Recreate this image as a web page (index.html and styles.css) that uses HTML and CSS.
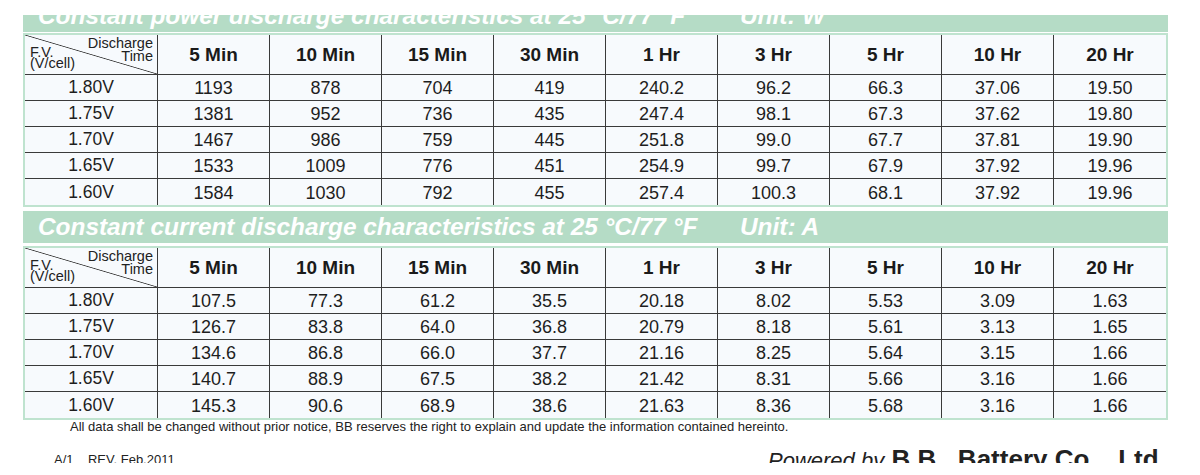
FILE: index.html
```html
<!DOCTYPE html>
<html>
<head>
<meta charset="utf-8">
<link rel="stylesheet" href="styles.css">
</head>
<body>
<div class="page">
  <div class="band band-clipped">
    <div class="band-line"><span>Constant power discharge characteristics at 25 °C/77 °F</span><span>Unit: W</span></div>
  </div>
  <table class="grid grid-first">
    <colgroup><col class="c0"><col class="cn"><col class="cn"><col class="cn"><col class="cn"><col class="cn"><col class="cn"><col class="cn"><col class="cn"><col class="cn"></colgroup>
    <thead>
      <tr>
        <th class="corner"><div class="corner-box"><span class="corner-top">Discharge<br>Time</span><span class="corner-bottom">F.V.<br>(V/cell)</span></div></th>
        <th>5 Min</th><th>10 Min</th><th>15 Min</th><th>30 Min</th><th>1 Hr</th><th>3 Hr</th><th>5 Hr</th><th>10 Hr</th><th>20 Hr</th>
      </tr>
    </thead>
    <tbody>
      <tr><td class="fv">1.80V</td><td>1193</td><td>878</td><td>704</td><td>419</td><td>240.2</td><td>96.2</td><td>66.3</td><td>37.06</td><td>19.50</td></tr>
      <tr><td class="fv">1.75V</td><td>1381</td><td>952</td><td>736</td><td>435</td><td>247.4</td><td>98.1</td><td>67.3</td><td>37.62</td><td>19.80</td></tr>
      <tr><td class="fv">1.70V</td><td>1467</td><td>986</td><td>759</td><td>445</td><td>251.8</td><td>99.0</td><td>67.7</td><td>37.81</td><td>19.90</td></tr>
      <tr><td class="fv">1.65V</td><td>1533</td><td>1009</td><td>776</td><td>451</td><td>254.9</td><td>99.7</td><td>67.9</td><td>37.92</td><td>19.96</td></tr>
      <tr><td class="fv">1.60V</td><td>1584</td><td>1030</td><td>792</td><td>455</td><td>257.4</td><td>100.3</td><td>68.1</td><td>37.92</td><td>19.96</td></tr>
    </tbody>
  </table>
  <div class="band band-second">
    <div class="band-line"><span>Constant current discharge characteristics at 25 °C/77 °F</span><span>Unit: A</span></div>
  </div>
  <table class="grid grid-second">
    <colgroup><col class="c0"><col class="cn"><col class="cn"><col class="cn"><col class="cn"><col class="cn"><col class="cn"><col class="cn"><col class="cn"><col class="cn"></colgroup>
    <thead>
      <tr>
        <th class="corner"><div class="corner-box"><span class="corner-top">Discharge<br>Time</span><span class="corner-bottom">F.V.<br>(V/cell)</span></div></th>
        <th>5 Min</th><th>10 Min</th><th>15 Min</th><th>30 Min</th><th>1 Hr</th><th>3 Hr</th><th>5 Hr</th><th>10 Hr</th><th>20 Hr</th>
      </tr>
    </thead>
    <tbody>
      <tr><td class="fv">1.80V</td><td>107.5</td><td>77.3</td><td>61.2</td><td>35.5</td><td>20.18</td><td>8.02</td><td>5.53</td><td>3.09</td><td>1.63</td></tr>
      <tr><td class="fv">1.75V</td><td>126.7</td><td>83.8</td><td>64.0</td><td>36.8</td><td>20.79</td><td>8.18</td><td>5.61</td><td>3.13</td><td>1.65</td></tr>
      <tr><td class="fv">1.70V</td><td>134.6</td><td>86.8</td><td>66.0</td><td>37.7</td><td>21.16</td><td>8.25</td><td>5.64</td><td>3.15</td><td>1.66</td></tr>
      <tr><td class="fv">1.65V</td><td>140.7</td><td>88.9</td><td>67.5</td><td>38.2</td><td>21.42</td><td>8.31</td><td>5.66</td><td>3.16</td><td>1.66</td></tr>
      <tr><td class="fv">1.60V</td><td>145.3</td><td>90.6</td><td>68.9</td><td>38.6</td><td>21.63</td><td>8.36</td><td>5.68</td><td>3.16</td><td>1.66</td></tr>
    </tbody>
  </table>
  <p class="note">All data shall be changed without prior notice, BB reserves the right to explain and update the information contained hereinto.</p>
  <div class="footer">
    <span class="rev">A/1&nbsp;&nbsp;&nbsp; REV. Feb.2011</span>
    <span class="brand"><span class="powered">Powered by</span> <span class="company">B.B.&nbsp; Battery Co.,&nbsp; Ltd.</span></span>
  </div>
</div>
</body>
</html>
```

FILE: styles.css
```css
* { box-sizing: border-box; }

body {
  margin: 0;
  background: #ffffff;
  font-family: "Liberation Sans", Arial, sans-serif;
  color: #1c1c1c;
}

.page {
  width: 1168px;
  padding: 15px 0 0 23px;
}

.band {
  height: 32px;
  background: #b5dcc6;
  overflow: hidden;
}

.band-clipped {
  height: 17px;
}

.band-clipped .band-line {
  margin-top: -15px;
}

.band-second {
  margin-top: 4px;
}

.band-line {
  height: 32px;
  line-height: 32px;
  display: grid;
  grid-template-columns: 702px auto;
  padding-left: 15px;
  font-size: 24.4px;
  font-weight: bold;
  font-style: italic;
  color: #ffffff;
  white-space: nowrap;
}

.grid {
  width: 1145px;
  border: 2px solid #bfe3cf;
  border-spacing: 0;
  table-layout: fixed;
  background: #f7fafd;
}

.grid-first {
  margin-top: 1px;
}

.grid-second {
  margin-top: 3px;
}

.c0 { width: 133px; }
.cn { width: 112px; }

.grid th,
.grid td {
  padding: 0;
  text-align: center;
  border-right: 1px solid #3a3a3a;
  border-bottom: 1px solid #3a3a3a;
  white-space: nowrap;
}

.grid tr > :last-child {
  border-right: 0;
}

.grid tbody tr:last-child td {
  border-bottom: 0;
}

.grid thead tr {
  height: 40px;
}

.grid tbody tr {
  height: 26px;
}

.grid th {
  font-size: 19px;
  font-weight: bold;
  color: #1a1a1a;
}

.grid td {
  font-size: 18px;
  color: #1e1e1e;
  padding-top: 2px;
}

.grid td.fv {
  padding-top: 0;
  font-size: 17.5px;
}

.corner {
  background: linear-gradient(to top right, transparent calc(50% - 0.8px), #3a3a3a 50%, transparent calc(50% + 0.8px));
}

.corner-box {
  display: grid;
  height: 39px;
  font-size: 14.5px;
  font-weight: normal;
  color: #222;
}

.corner-top,
.corner-bottom {
  grid-area: 1 / 1;
}

.corner-top {
  justify-self: end;
  align-self: start;
  text-align: right;
  line-height: 13px;
  padding: 2px 4px 0 0;
}

.corner-bottom {
  justify-self: start;
  align-self: end;
  text-align: left;
  line-height: 11px;
  padding: 0 0 5px 5px;
}

.note {
  margin: 0;
  padding-left: 47px;
  font-size: 13px;
  line-height: 14px;
  color: #222;
}

.footer {
  height: 29px;
  overflow: hidden;
  display: grid;
  grid-template-columns: 745px auto;
  align-items: start;
  color: #222;
}

.rev {
  padding-left: 31px;
  margin-top: 18px;
  font-size: 13px;
  line-height: 15px;
  white-space: pre;
}

.brand {
  margin-top: 10px;
  font-size: 26px;
  line-height: 30px;
  white-space: nowrap;
}

.powered {
  font-size: 22px;
  font-style: italic;
}

.company {
  font-weight: bold;
}
```
